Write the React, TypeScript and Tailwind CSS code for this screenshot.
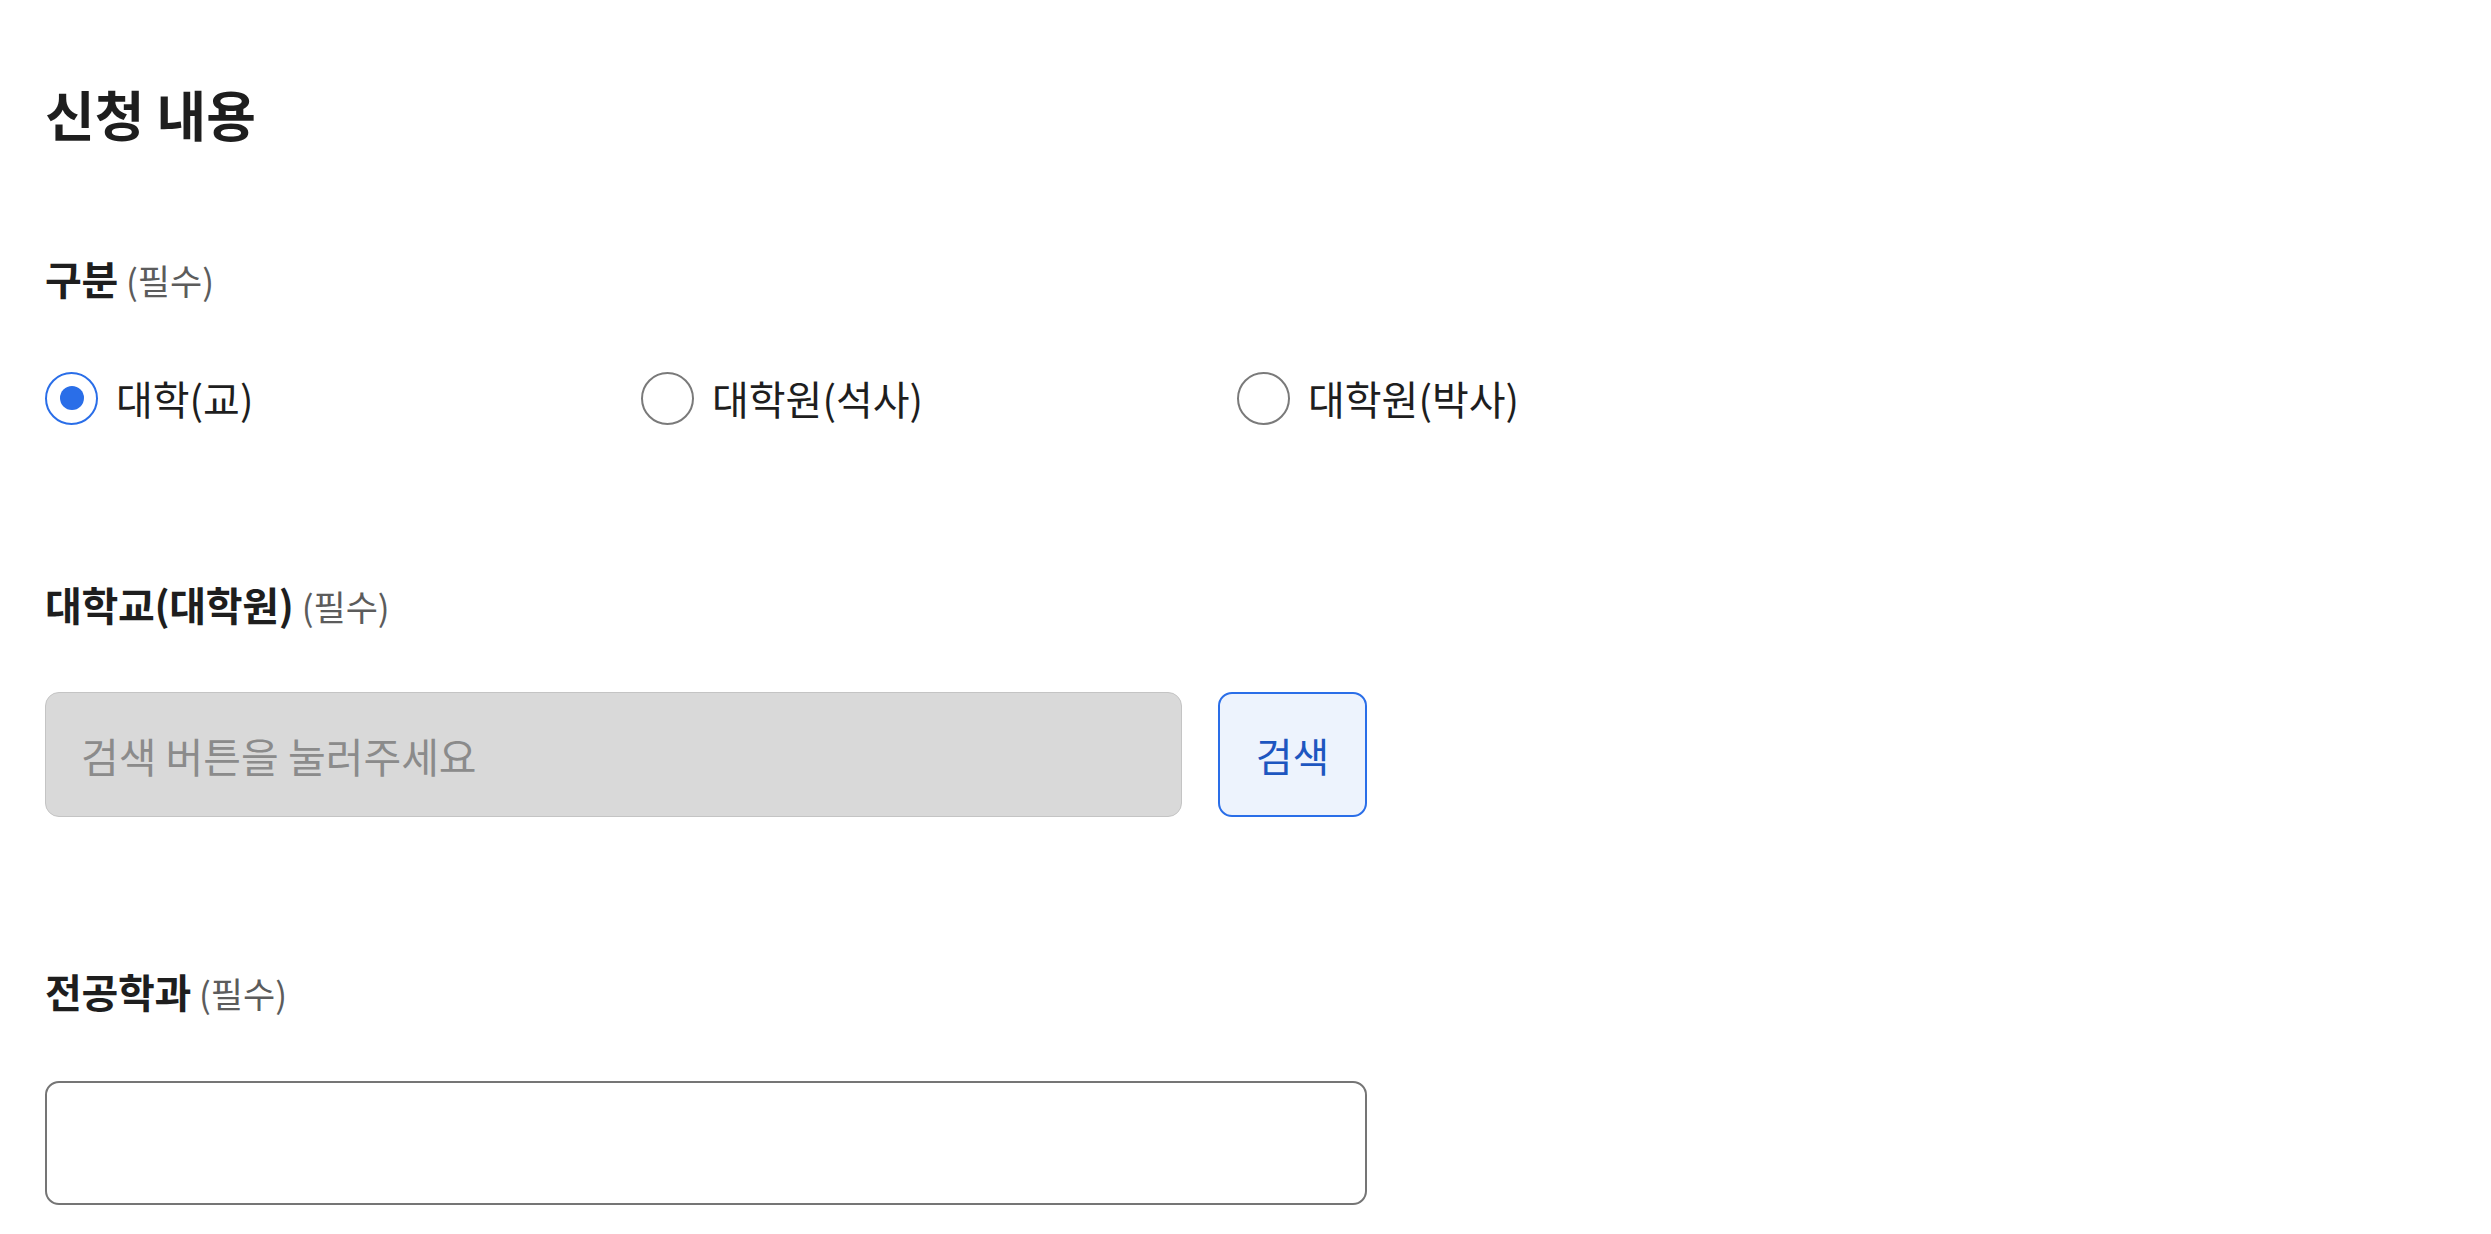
import React from 'react';

const FONT = { fontFamily: '"Noto Sans CJK KR", "Noto Sans", sans-serif' };

function FieldLabel({ text }: { text: string }) {
  return (
    <div className="flex items-baseline h-[54px] leading-[54px]">
      <span className="text-[40px] font-bold text-[#1e1e1e] tracking-[-0.3px]">{text}</span>
      <span className="ml-[8px] text-[35px] text-[#5c5c5c]">(필수)</span>
    </div>
  );
}

function Radio({ label, checked }: { label: string; checked?: boolean }) {
  return (
    <label className="flex items-center w-[596px] h-[54px] cursor-pointer">
      <span
        className={
          checked
            ? 'flex items-center justify-center w-[53px] h-[53px] rounded-full border-2 border-[#2a6ee8] bg-white'
            : 'flex items-center justify-center w-[53px] h-[53px] rounded-full border-2 border-[#7a7a7a] bg-white'
        }
      >
        {checked && <span className="w-[24px] h-[24px] rounded-full bg-[#2a6ee8]" />}
      </span>
      <span className="ml-[18px] text-[40px] leading-[54px] text-[#1e1e1e]">{label}</span>
    </label>
  );
}

export default function App() {
  return (
    <div className="min-h-screen bg-white pl-[45px] pt-[84px]" style={FONT}>
      <h1 className="text-[54px] font-bold leading-[60px] text-[#1e1e1e]">신청 내용</h1>

      <section className="mt-[107px]">
        <FieldLabel text="구분" />
        <div className="flex mt-[66px]">
          <Radio label="대학(교)" checked />
          <Radio label="대학원(석사)" />
          <Radio label="대학원(박사)" />
        </div>
      </section>

      <section className="mt-[152px]">
        <FieldLabel text="대학교(대학원)" />
        <div className="flex mt-[61px] gap-[36px]">
          <input
            disabled
            placeholder="검색 버튼을 눌러주세요"
            className="w-[1137px] h-[125px] px-[35px] rounded-[14px] border border-[#c4c4c4] bg-[#d9d9d9] text-[41px] placeholder:text-[#8b8b8b] outline-none"
          />
          <button className="w-[149px] h-[125px] rounded-[14px] border-2 border-[#2a6ee8] bg-[#edf3fd] text-[40px] text-[#1d56c0]">
            검색
          </button>
        </div>
      </section>

      <section className="mt-[147px]">
        <FieldLabel text="전공학과" />
        <input
          className="mt-[63px] block w-[1322px] h-[124px] px-[35px] rounded-[14px] border-2 border-[#757575] bg-white text-[40px] outline-none"
        />
      </section>
    </div>
  );
}
